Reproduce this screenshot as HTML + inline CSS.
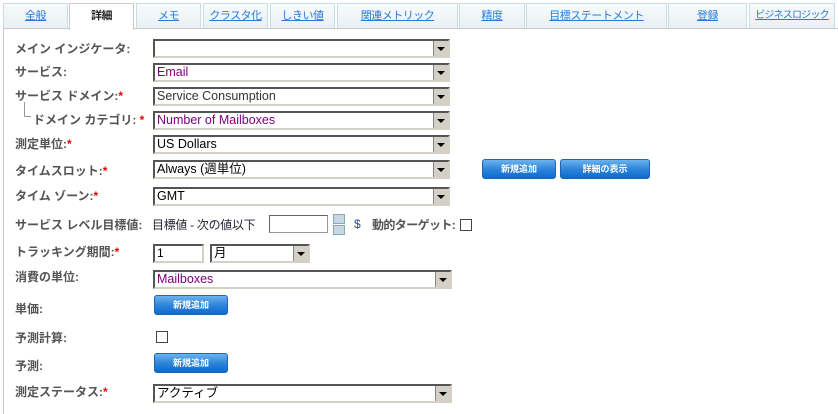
<!DOCTYPE html>
<html><head><meta charset="utf-8"><style>
body{margin:0;width:838px;height:413px;background:#fff;font-family:"Liberation Sans","Noto Sans CJK JP",sans-serif;font-size:12px;position:relative;overflow:hidden}
.a{position:absolute;white-space:nowrap}
.tab{position:absolute;top:3px;height:24px;background:linear-gradient(#f8fbfc,#e8f0f3);border:1px solid #c5dde4;border-bottom:none;text-align:center;line-height:24px;color:#2a7ad8;text-decoration:underline;font-size:11px;white-space:nowrap;overflow:hidden;letter-spacing:-0.5px}
.tab.act{background:#fff;border-color:#c8c8c8;color:#222;font-weight:bold;text-decoration:none;height:26px;z-index:2}
.lbl{position:absolute;left:15px;color:#555;font-weight:bold;font-size:12px;white-space:nowrap}
.req{color:#e00}
.sel{position:absolute;height:15px;border:2px solid;border-color:#555 #d4d0c8 #d4d0c8 #555;background:#fff;font-size:12.5px;line-height:15px;padding-left:2px;color:#800080;box-sizing:content-box;white-space:nowrap}
.sel .ar{position:absolute;right:0;top:0;width:14px;height:15px;background:#d4d0c8;border-left:1px solid #888}
.sel .ar:after{content:"";position:absolute;left:3px;top:6px;border:4px solid transparent;border-top:4px solid #000;border-bottom:0}
.btn{position:absolute;height:18px;border:1px solid #1e66b0;border-radius:3px;background:linear-gradient(#6cb3ef,#2f86d8 50%,#0a6ad0);color:#fff;font-weight:bold;font-size:9px;text-align:center;line-height:18px;white-space:nowrap}
.cb{position:absolute;width:10px;height:10px;border:1px solid #444;background:#fff}
</style></head><body>
<div class="a" style="left:3px;top:28px;width:835px;height:385px;border-left:1px solid #c8c8c8;border-top:1px solid #c8c8c8"></div>
<div class="tab" style="left:3px;width:63px">全般</div>
<div class="tab act" style="left:69px;width:63px">詳細</div>
<div class="tab" style="left:136px;width:63px">メモ</div>
<div class="tab" style="left:203px;width:63px">クラスタ化</div>
<div class="tab" style="left:270px;width:63px">しきい値</div>
<div class="tab" style="left:337px;width:119px">関連メトリック</div>
<div class="tab" style="left:459px;width:64px">精度</div>
<div class="tab" style="left:526px;width:139px">目標ステートメント</div>
<div class="tab" style="left:668px;width:77px">登録</div>
<div class="tab" style="left:749px;width:84px;font-size:10px;letter-spacing:-0.8px">ビジネスロジック</div>

<div class="lbl" style="top:40px">メイン インジケータ:</div>
<div class="sel" style="left:153px;top:39px;width:291px"><span class="ar"></span></div>
<div class="lbl" style="top:63px">サービス:</div>
<div class="sel" style="left:153px;top:63px;width:291px">Email<span class="ar"></span></div>
<div class="lbl" style="top:87px">サービス ドメイン:<span class="req">*</span></div>
<div class="sel" style="left:153px;top:87px;width:291px;color:#333">Service Consumption<span class="ar"></span></div>
<div class="a" style="left:24px;top:102px;width:6px;height:14px;border-left:1px solid #999;border-bottom:1px solid #999"></div>
<div class="lbl" style="top:111px;left:33px">ドメイン カテゴリ: <span class="req">*</span></div>
<div class="sel" style="left:153px;top:111px;width:291px">Number of Mailboxes<span class="ar"></span></div>
<div class="lbl" style="top:135px">測定単位:<span class="req">*</span></div>
<div class="sel" style="left:153px;top:135px;width:291px;color:#000">US Dollars<span class="ar"></span></div>
<div class="lbl" style="top:162px">タイムスロット:<span class="req">*</span></div>
<div class="sel" style="left:153px;top:160px;width:291px;color:#000">Always (週単位)<span class="ar"></span></div>
<div class="btn" style="left:482px;top:159px;width:72px">新規追加</div>
<div class="btn" style="left:560px;top:159px;width:88px">詳細の表示</div>
<div class="lbl" style="top:187px">タイム ゾーン:<span class="req">*</span></div>
<div class="sel" style="left:153px;top:187px;width:291px;color:#000">GMT<span class="ar"></span></div>

<div class="lbl" style="top:216px">サービス レベル目標値:</div>
<div class="a" style="left:152px;top:216px;color:#223;font-size:12px;letter-spacing:-0.3px">目標値 - 次の値以下</div>
<div class="a" style="left:269px;top:215px;width:57px;height:16px;border:1px solid #999;border-top-color:#666;border-left-color:#666"></div>
<div class="a" style="left:333px;top:214px;width:10px;height:8px;background:#c9d6e6;border:1px solid #8aa"></div>
<div class="a" style="left:333px;top:225px;width:10px;height:8px;background:#c9d6e6;border:1px solid #8aa"></div>
<div class="a" style="left:354px;top:217px;color:#2a4c90">$</div>
<div class="a" style="left:372px;top:216px;color:#555;font-weight:bold;letter-spacing:-0.6px">動的ターゲット:</div>
<div class="cb" style="left:460px;top:219px"></div>

<div class="lbl" style="top:243px">トラッキング期間:<span class="req">*</span></div>
<div class="a" style="left:153px;top:244px;width:45px;height:15px;border:2px solid;border-color:#555 #d4d0c8 #d4d0c8 #555;line-height:15px;padding-left:2px">1</div>
<div class="sel" style="left:210px;top:244px;width:94px;color:#000">月<span class="ar"></span></div>
<div class="lbl" style="top:268px">消費の単位:</div>
<div class="sel" style="left:153px;top:270px;width:293px">Mailboxes<span class="ar"></span></div>
<div class="lbl" style="top:300px">単価:</div>
<div class="btn" style="left:154px;top:295px;width:72px">新規追加</div>
<div class="lbl" style="top:329px">予測計算:</div>
<div class="cb" style="left:156px;top:331px"></div>
<div class="lbl" style="top:357px">予測:</div>
<div class="btn" style="left:154px;top:353px;width:72px">新規追加</div>
<div class="lbl" style="top:383px">測定ステータス:<span class="req">*</span></div>
<div class="sel" style="left:153px;top:384px;width:293px;color:#000">アクティブ<span class="ar"></span></div>
</body></html>
